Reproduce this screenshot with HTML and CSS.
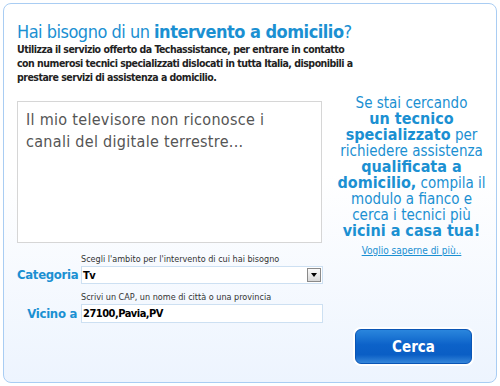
FILE: index.html
```html
<!DOCTYPE html>
<html lang="it">
  <head>
    <meta charset="UTF-8" />
    <title>Techassistance - Intervento a domicilio</title>
    <link rel="stylesheet" href="styles.css">
  </head>
  <body>
    <div class="box">
      <h1>Hai bisogno di un <b>intervento a domicilio</b>?</h1>
      <p class="intro">
        Utilizza il servizio offerto da Techassistance, per entrare in contatto<br>
        con numerosi tecnici specializzati dislocati in tutta Italia, disponibili a<br>
        prestare servizi di assistenza a domicilio.
      </p>
      <form class="search" id="searchForm">
        <div class="top">
          <textarea class="problem" name="problem">Il mio televisore non riconosce i
canali del digitale terrestre...</textarea>
          <div class="promo">
            <p>
              Se stai cercando<br>
              <b>un tecnico</b><br>
              <b>specializzato</b> per<br>
              richiedere assistenza<br>
              <b>qualificata a</b><br>
              <b>domicilio,</b> compila il<br>
              modulo a fianco e<br>
              cerca i tecnici più<br>
              <b>vicini a casa tua!</b>
            </p>
            <a href="#" class="more">Voglio saperne di più..</a>
          </div>
        </div>
        <div class="field">
          <label for="cat">Categoria</label>
          <div class="control">
            <span class="hint">Scegli l'ambito per l'intervento di cui hai bisogno</span>
            <div class="select" id="cat">
              <span class="value">Tv</span>
              <span class="arrow"></span>
            </div>
          </div>
        </div>
        <div class="field">
          <label for="near">Vicino a</label>
          <div class="control">
            <span class="hint">Scrivi un CAP, un nome di città o una provincia</span>
            <input type="text" id="near" name="near" value="27100,Pavia,PV" />
          </div>
        </div>
        <div class="actions">
          <button type="submit">Cerca</button>
        </div>
      </form>
    </div>
  </body>
</html>
```

FILE: styles.css
```css
body {
  margin: 0;
  padding: 3px;
  font-family: "DejaVu Sans Condensed", "DejaVu Sans", sans-serif;
  background: #fff;
}
.box {
  width: 494px;
  height: 380px;
  box-sizing: border-box;
  border: 1px solid #a9cdf3;
  border-radius: 8px;
  background: linear-gradient(#ffffff 45%, #edf4fe);
  padding: 18px 3px 0 13px;
}
h1 {
  margin: 0;
  font-size: 18px;
  letter-spacing: -0.5px;
  font-weight: normal;
  color: #1b90d2;
  line-height: 20px;
}
h1 b {
  font-weight: bold;
}
.intro {
  margin: 0;
  font-size: 10.5px;
  letter-spacing: -0.5px;
  font-weight: bold;
  color: #222;
  line-height: 14px;
}
.top {
  display: flex;
  align-items: flex-start;
  margin-top: 17px;
  height: 142px;
}
.problem {
  width: 305px;
  height: 142px;
  box-sizing: border-box;
  border: 1px solid #d6d6d6;
  padding: 7px 8px;
  font-family: inherit;
  font-size: 16px;
  letter-spacing: 0.3px;
  line-height: 22px;
  color: #555;
  resize: none;
  margin: 0;
}
.promo {
  flex: 1;
  margin: -6px 0 0 8px;
  text-align: center;
  color: #1b90d2;
}
.promo p {
  margin: 0;
  font-size: 15px;
  line-height: 16px;
}
.promo b {
  font-size: 16px;
  line-height: 16px;
}
.more {
  display: inline-block;
  margin-top: 2px;
  font-size: 10px;
  color: #1b90d2;
}
.field {
  display: flex;
  align-items: flex-end;
  margin-top: 7px;
}
.top + .field {
  margin-top: 10px;
}
.field label {
  width: 60px;
  padding: 0 4px 2px 0;
  text-align: right;
  font-size: 13px;
  letter-spacing: -0.3px;
  font-weight: bold;
  color: #1b90d2;
}
.control {
  display: flex;
  flex-direction: column;
  width: 242px;
}
.hint {
  font-size: 9px;
  color: #333;
  line-height: 13px;
}
.select {
  display: flex;
  justify-content: space-between;
  align-items: center;
  height: 18px;
  box-sizing: border-box;
  border: 1px solid #cde0f2;
  background: #fff;
}
.value,
.control input {
  font-size: 11px;
  letter-spacing: -0.5px;
  font-weight: bold;
  color: #000;
  padding: 0 1px;
}
.arrow {
  width: 12px;
  height: 12px;
  margin-right: 1px;
  border: 1px solid #8a8a8a;
  background: linear-gradient(#fafafa, #d8d8d8);
  position: relative;
}
.arrow::after {
  content: "";
  position: absolute;
  left: 3px;
  top: 4px;
  border: 3px solid transparent;
  border-top: 4px solid #000;
}
.control input {
  height: 19px;
  box-sizing: border-box;
  border: 1px solid #cde0f2;
  margin: 0;
  font-family: inherit;
}
.actions {
  display: flex;
  justify-content: flex-end;
  padding-right: 21px;
  margin-top: 6px;
}
button {
  width: 117px;
  height: 35px;
  border: 1px solid #0a55b5;
  border-radius: 6px;
  box-shadow: 0 0 0 2px #fff;
  background: linear-gradient(#2a86dd, #0c62c9 45%, #0a5ec5 75%, #3586da);
  color: #fff;
  font-family: inherit;
  font-size: 15px;
  font-weight: bold;
  cursor: pointer;
}
```
